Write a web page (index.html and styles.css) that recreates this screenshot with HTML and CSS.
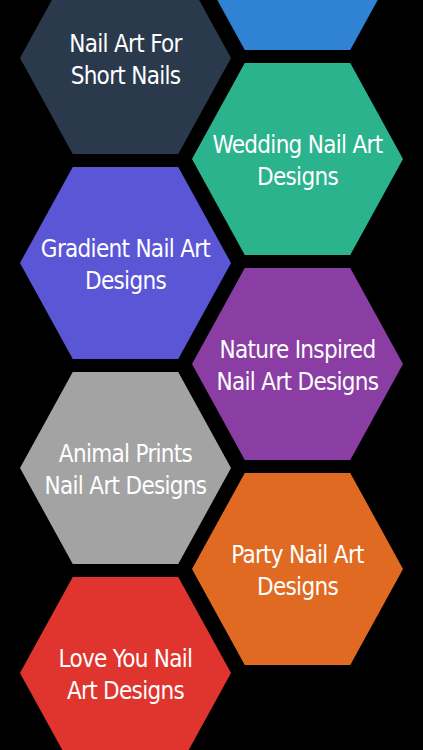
FILE: index.html
```html
<!DOCTYPE html>
<html>
<head>
<meta charset="utf-8">
<link rel="stylesheet" href="styles.css">
</head>
<body>
<div class="comb">
  <div class="col col-left">
    <div class="hex c-dark"><span>Nail Art For<br>Short Nails</span></div>
    <div class="hex c-indigo"><span>Gradient Nail Art<br>Designs</span></div>
    <div class="hex c-gray"><span>Animal Prints<br>Nail Art Designs</span></div>
    <div class="hex c-red"><span>Love You Nail<br>Art Designs</span></div>
  </div>
  <div class="col col-right">
    <div class="hex c-blue"><span></span></div>
    <div class="hex c-green"><span>Wedding Nail Art<br>Designs</span></div>
    <div class="hex c-purple"><span>Nature Inspired<br>Nail Art Designs</span></div>
    <div class="hex c-orange"><span>Party Nail Art<br>Designs</span></div>
  </div>
</div>
</body>
</html>
```

FILE: styles.css
```css
html, body {
  margin: 0;
  padding: 0;
  background: #000;
  height: 100%;
  overflow: hidden;
}
.comb {
  display: flex;
  align-items: flex-start;
  padding-left: 20px;
}
.col {
  display: flex;
  flex-direction: column;
  gap: 13px;
  flex: none;
}
.col-left {
  margin-top: -38px;
}
.col-right {
  margin-top: -142px;
  margin-left: -39px;
}
.hex {
  width: 211px;
  height: 192px;
  clip-path: polygon(25% 0, 75% 0, 100% 50%, 75% 100%, 25% 100%, 0 50%);
  display: flex;
  align-items: center;
  justify-content: center;
  text-align: center;
  color: #fff;
  font-family: "Liberation Sans Narrow", "DejaVu Sans Condensed", "Liberation Sans", sans-serif;
  font-size: 24px;
  letter-spacing: -0.7px;
  line-height: 32px;
}
.hex span {
  display: block;
  margin-top: 4px;
}
.c-dark { background: #2a3a4c; }
.c-indigo { background: #5a56d6; }
.c-gray { background: #a3a3a3; }
.c-red { background: #e0352f; }
.c-blue { background: #2f83d2; }
.c-green { background: #2bb38e; }
.c-purple { background: #8a3ea4; }
.c-orange { background: #e06a22; }
```
